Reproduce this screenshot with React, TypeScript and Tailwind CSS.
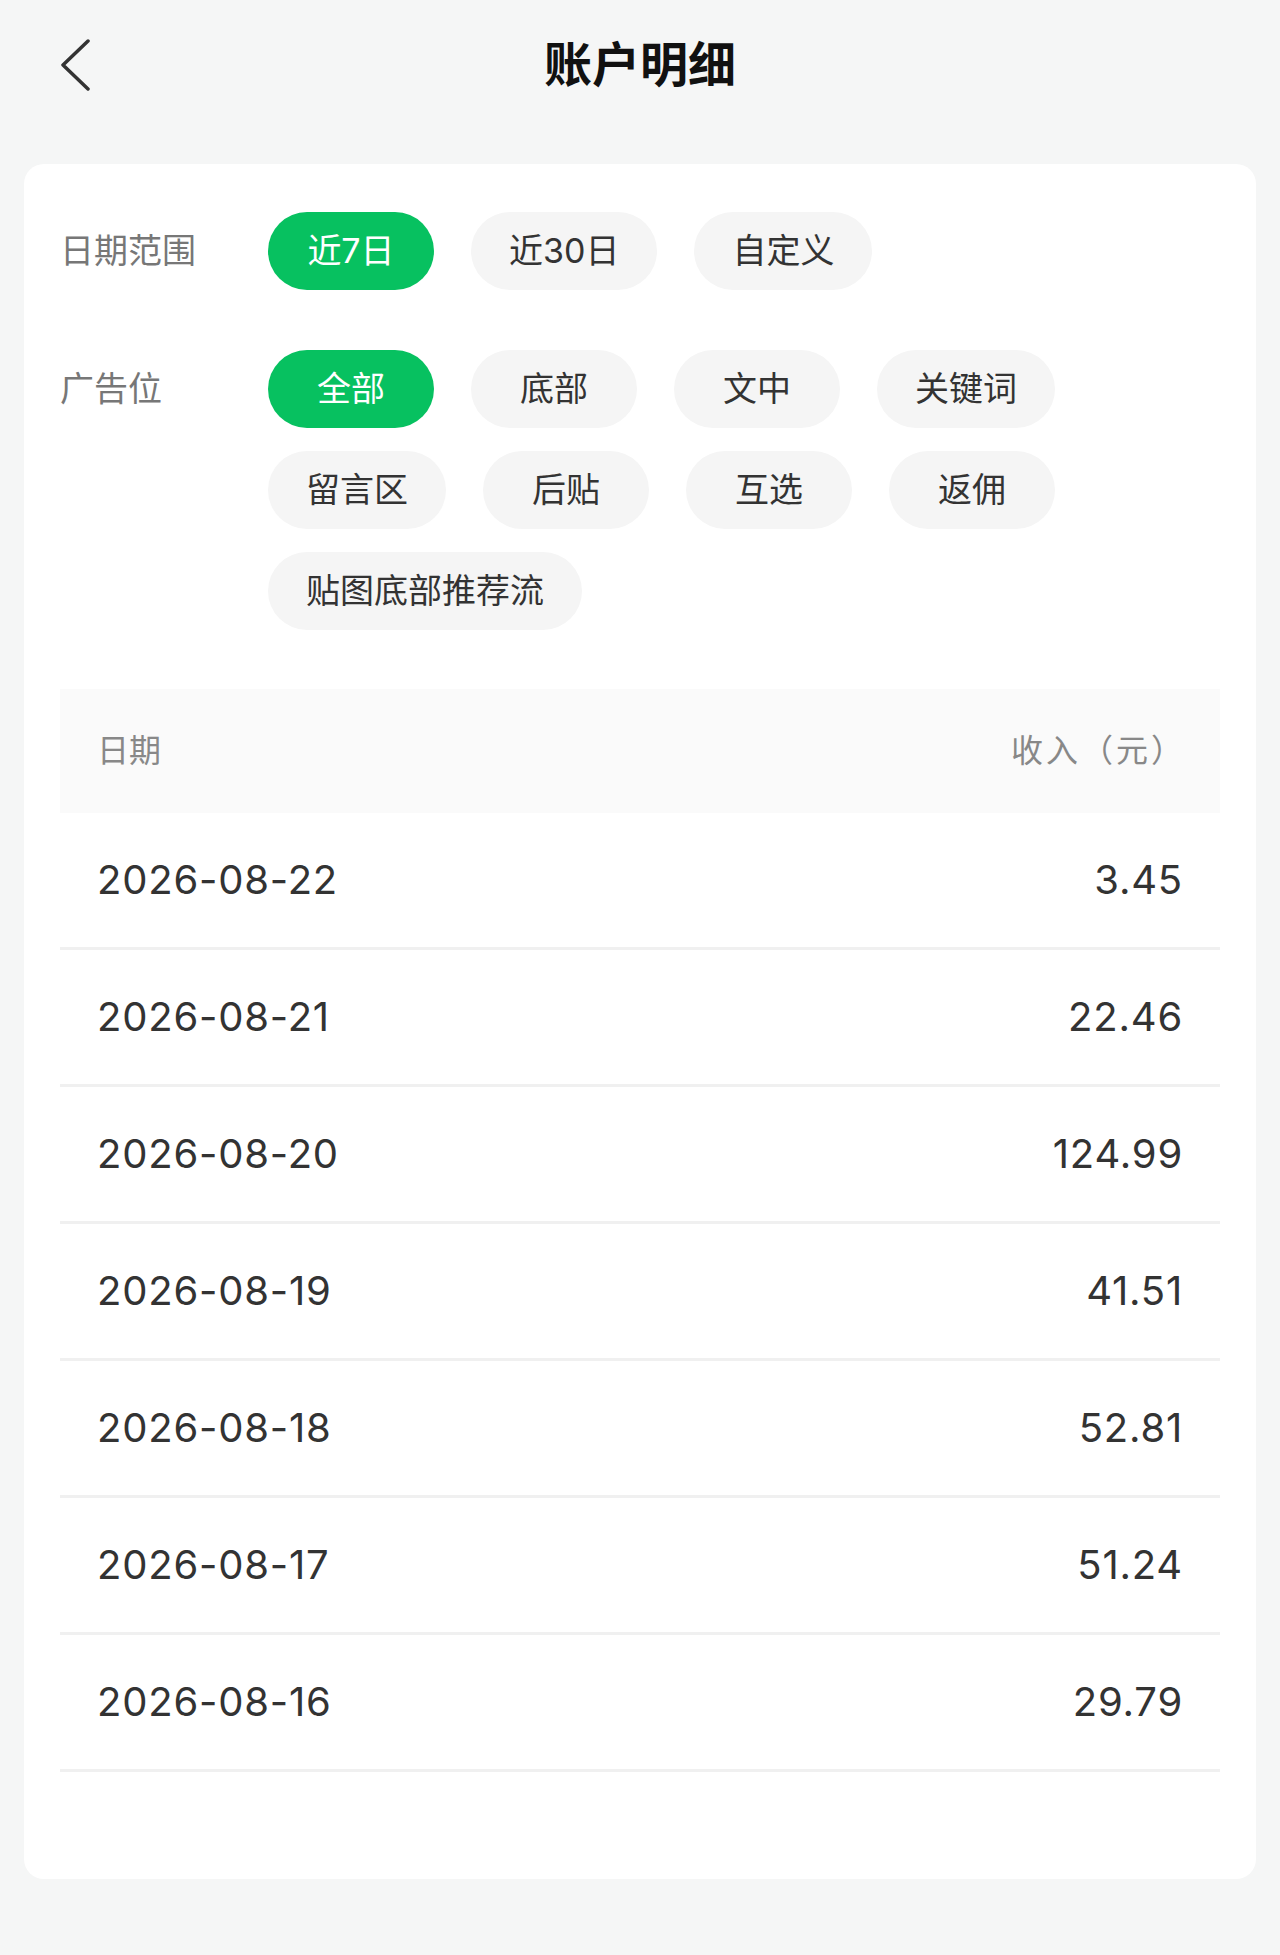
import { useState } from "react";

const dateRanges = ["近7日", "近30日", "自定义"];
const adSlots = ["全部", "底部", "文中", "关键词", "留言区", "后贴", "互选", "返佣", "贴图底部推荐流"];

const rows = [
  { date: "2026-08-22", income: "3.45" },
  { date: "2026-08-21", income: "22.46" },
  { date: "2026-08-20", income: "124.99" },
  { date: "2026-08-19", income: "41.51" },
  { date: "2026-08-18", income: "52.81" },
  { date: "2026-08-17", income: "51.24" },
  { date: "2026-08-16", income: "29.79" },
];

function Pill({ label, active, onClick }: { label: string; active: boolean; onClick: () => void }) {
  return (
    <button
      onClick={onClick}
      className={
        active
          ? "h-[78px] min-w-[166px] px-[38px] rounded-full bg-[#07c160] text-white text-[34px] leading-none flex items-center justify-center"
          : "h-[78px] min-w-[166px] px-[38px] rounded-full bg-[#f5f5f5] text-[#333333] text-[34px] leading-none flex items-center justify-center"
      }
    >
      {label}
    </button>
  );
}

export default function App() {
  const [range, setRange] = useState("近7日");
  const [slot, setSlot] = useState("全部");

  return (
    <div
      className="min-h-screen bg-[#f5f6f6] pb-[77px]"
      style={{ fontFamily: '"Inter", "Noto Sans CJK SC", sans-serif' }}
    >
      <div className="h-[130px] grid grid-cols-[1fr_auto_1fr] items-center">
        <button className="justify-self-start ml-[60px] w-[32px] h-[52px] flex items-center justify-center">
          <svg width="32" height="52" viewBox="0 0 32 52" fill="none">
            <path d="M28 2 L3 26 L28 50" stroke="#333333" strokeWidth="3.5" strokeLinecap="round" strokeLinejoin="round" />
          </svg>
        </button>
        <h1 className="text-[48px] font-bold text-[#111111] leading-none">账户明细</h1>
        <div />
      </div>

      <div className="mx-[24px] mt-[34px] bg-white rounded-[20px] px-[36px] pt-[48px] pb-[107px]">
        <div className="flex items-center">
          <div className="w-[208px] shrink-0 text-[34px] text-[#777777] leading-none">日期范围</div>
          <div className="flex flex-wrap gap-x-[37px] gap-y-[23px]">
            {dateRanges.map((r) => (
              <Pill key={r} label={r} active={range === r} onClick={() => setRange(r)} />
            ))}
          </div>
        </div>

        <div className="flex items-start mt-[60px]">
          <div className="w-[208px] shrink-0 h-[78px] flex items-center text-[34px] text-[#777777] leading-none">广告位</div>
          <div className="flex flex-wrap gap-x-[37px] gap-y-[23px] flex-1">
            {adSlots.map((s) => (
              <Pill key={s} label={s} active={slot === s} onClick={() => setSlot(s)} />
            ))}
          </div>
        </div>

        <div className="mt-[59px]">
          <div className="h-[124px] bg-[#fafafa] px-[37px] flex items-center justify-between text-[32px] text-[#888888]">
            <span>日期</span>
            <span className="tracking-[3px] -mr-[3px]">收入（元）</span>
          </div>
          {rows.map((row) => (
            <div
              key={row.date}
              className="h-[137px] border-b-[3px] border-[#f0f0f0] px-[37px] flex items-center justify-between text-[40px] text-[#333333] tracking-[0.8px]"
            >
              <span>{row.date}</span>
              <span>{row.income}</span>
            </div>
          ))}
        </div>
      </div>
    </div>
  );
}
